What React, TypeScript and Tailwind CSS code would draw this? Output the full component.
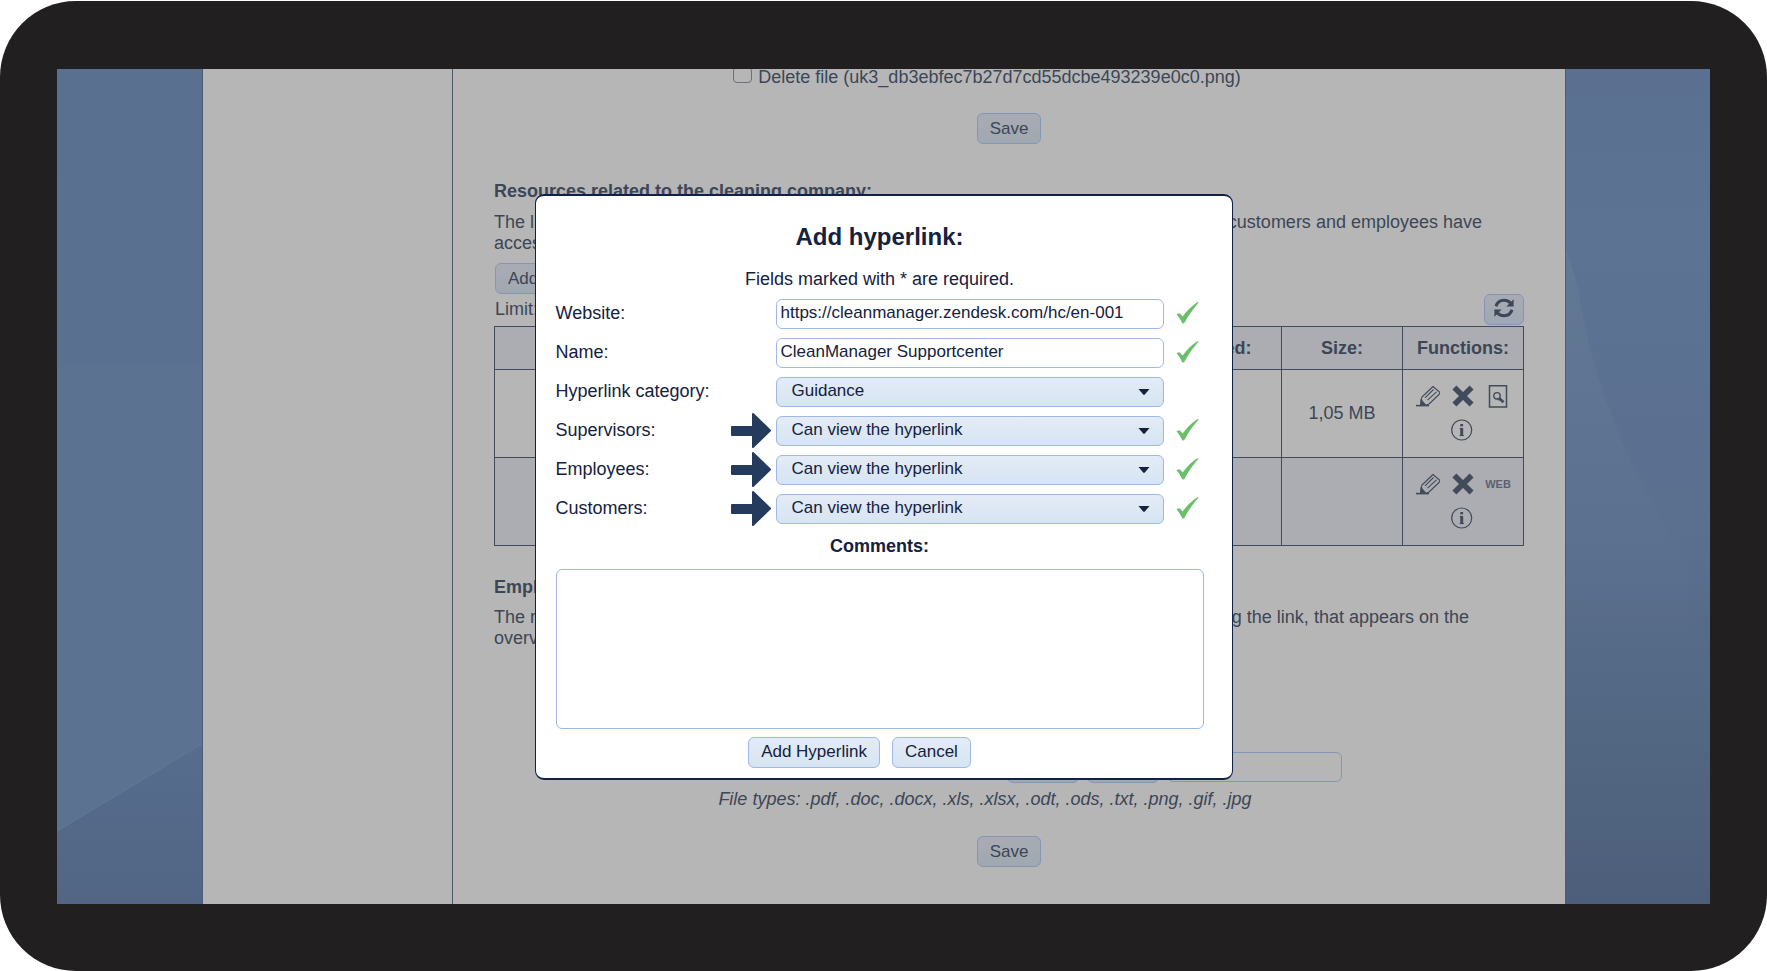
import React, { useState } from 'react';

const ACCESS_OPTIONS = ['Can view the hyperlink', 'Cannot view the hyperlink'];
const CATEGORY_OPTIONS = ['Guidance', 'Instructions', 'Other'];

const CheckIcon: React.FC = () => (
  <svg className="w-6 h-6" viewBox="0 0 24 24" fill="#6abf69">
    <path d="M0.5 12 L3.2 11.2 C4.8 12 5.8 13.2 6.6 14.6 C10.5 9 16 3.6 21.6 0 L22.6 0.6 C17.5 6.5 12 14 8.2 21.2 L6.4 21.4 C4.8 18 2.8 15 0.5 12 Z" />
  </svg>
);

const ArrowIcon: React.FC = () => (
  <svg className="w-10 h-[35px] -my-1" viewBox="0 0 40 35" fill="#243b5e" stroke="#243b5e" strokeWidth={2} strokeLinejoin="round">
    <path d="M1 14 H22 V1 L39 17.5 L22 34 V22 H1 Z" />
  </svg>
);

const RefreshIcon: React.FC = () => (
  <svg className="w-5 h-5 shrink-0" viewBox="0 0 20 20" fill="none" stroke="#3c4656" strokeWidth={3}>
    <path d="M2 8.2 C3.2 4.2 6.3 2.2 10 2.2 C12.6 2.2 14.8 3.2 16.4 5" />
    <path d="M18 11.8 C16.8 15.8 13.7 17.8 10 17.8 C7.4 17.8 5.2 16.8 3.6 15" />
    <path d="M19.6 1.2 V8.4 H12.4 Z M0.4 18.8 V11.6 H7.6 Z" fill="#3c4656" stroke="none" />
  </svg>
);

const PencilIcon: React.FC = () => (
  <svg className="w-6 h-6" viewBox="0 0 24 24" fill="none" stroke="#424b59" strokeWidth={1.1} strokeLinejoin="round">
    <path d="M5.5 12.5 L17 1.5 L24 7.5 L23 9.5 L13 19 L9.5 20.5" />
    <path d="M9 12.8 L17.5 4.5 M11.5 15.2 L20.5 6.8" />
    <path d="M5.5 12.5 V20.5" />
    <path d="M5 14.5 L10 20.5 H4.5 Z" fill="#424b59" />
    <path d="M0 20.6 H13" strokeWidth={1.6} />
  </svg>
);

const DeleteIcon: React.FC = () => (
  <svg className="w-6 h-6" viewBox="0 0 24 24" fill="none" stroke="#424b59" strokeWidth={5.6}>
    <path d="M3.4 2.4 L20.6 19.6 M20.6 2.4 L3.4 19.6" />
  </svg>
);

const PreviewIcon: React.FC = () => (
  <svg className="w-6 h-6" viewBox="0 0 24 24" fill="none" stroke="#424b59">
    <path d="M3.5 0.8 H20.5 V22 H3.5 Z" strokeWidth={1.5} />
    <circle cx="11" cy="10.8" r="3.2" strokeWidth={1.4} />
    <path d="M13.2 13.2 L17.5 17.2" strokeWidth={2.6} />
    <path d="M11.5 14.8 H16" strokeWidth={1} />
  </svg>
);

const InfoIcon: React.FC = () => (
  <svg className="w-6 h-6" viewBox="0 0 24 24" fill="none" stroke="#424b59">
    <circle cx="10.7" cy="11" r="10" strokeWidth={1.2} />
    <path d="M10.7 9 V17" strokeWidth={3} />
    <path d="M8.7 9.4 H10.7 M8.5 16.6 H13" strokeWidth={0.9} />
    <path d="M10.7 5 V7.4" strokeWidth={2.8} />
  </svg>
);

const iconButton = 'w-6 h-6 flex items-center justify-center';

const FunctionIcons: React.FC<{ web?: boolean }> = ({ web }) => (
  <div className="flex flex-wrap justify-center gap-x-[11px] gap-y-[10px]">
    <button type="button" aria-label="Edit" className={iconButton}><PencilIcon /></button>
    <button type="button" aria-label="Delete" className={iconButton}><DeleteIcon /></button>
    {web ? (
      <a href="#web" className="w-6 h-6 flex items-center justify-center text-[11px] font-bold text-[#5a6170]">WEB</a>
    ) : (
      <button type="button" aria-label="Preview" className={iconButton}><PreviewIcon /></button>
    )}
    <button type="button" aria-label="Information" className={iconButton}><InfoIcon /></button>
  </div>
);

const pageButton =
  'h-[31px] px-3 rounded-md border border-[#8496b5] bg-gradient-to-b from-[#a9abb4] to-[#9fa8b1] text-[17px] leading-5 text-[#3c4656]';

const dialogButton =
  'h-[31px] px-3 rounded-md border border-[#9db9e4] bg-gradient-to-b from-[#e4ebf5] to-[#d6e5f3] text-[17px] leading-5 text-[#14213f]';

const textField =
  'w-full h-[30px] px-1 pb-[2px] rounded-md border border-[#9db9e4] bg-white text-[17px] text-[#14213f]';

interface RowProps {
  id: string;
  label: string;
  arrow?: boolean;
  valid?: boolean;
  children: React.ReactNode;
}

const FormRow: React.FC<RowProps> = ({ id, label, arrow, valid, children }) => (
  <div className="h-[30px] flex items-center">
    <label htmlFor={id} className="w-[220px] shrink-0 flex items-center justify-between pr-[5px]">
      {label}
      {arrow && <ArrowIcon />}
    </label>
    <div className="w-[388px] shrink relative">{children}</div>
    <div className="pl-3 w-9 shrink-0">{valid && <CheckIcon />}</div>
  </div>
);

interface SelectProps {
  id: string;
  options: string[];
}

const SelectField: React.FC<SelectProps> = ({ id, options }) => {
  const [value, setValue] = useState(options[0]);
  return (
    <>
      <select
        id={id}
        value={value}
        onChange={(e) => setValue(e.target.value)}
        className="block appearance-none w-full h-[30px] pl-[15px] pr-10 pb-[2px] rounded-md border border-[#9db9e4] bg-gradient-to-b from-[#e4ebf5] to-[#d6e5f3] text-[17px] text-[#14213f]"
      >
        {options.map((o) => (
          <option key={o}>{o}</option>
        ))}
      </select>
      <svg className="absolute right-[14px] top-3 w-3 h-[6px] pointer-events-none" viewBox="0 0 12 6" fill="#14213f">
        <path d="M0.5 0 H11.5 L6.8 5.6 Q6 6.2 5.2 5.6 Z" />
      </svg>
    </>
  );
};

const AddHyperlinkDialog: React.FC = () => {
  const [website, setWebsite] = useState('https://cleanmanager.zendesk.com/hc/en-001');
  const [name, setName] = useState('CleanManager Supportcenter');
  const [comments, setComments] = useState('');

  return (
    <form
      role="dialog"
      aria-labelledby="dialog-title"
      onSubmit={(e) => e.preventDefault()}
      className="w-[698px] max-w-full rounded-[9px] border border-y-2 border-[#0f2145] bg-white pt-[27px] pb-[10px] pl-5 pr-7 text-lg leading-[21px] text-[#14213f]"
    >
      <h2 id="dialog-title" className="text-2xl leading-7 font-bold text-center">Add hyperlink:</h2>
      <p className="mt-[18px] text-center">Fields marked with * are required.</p>

      <div className="mt-[9px] flex flex-col gap-[9px]">
        <FormRow id="website" label="Website:" valid>
          <input id="website" type="text" value={website} onChange={(e) => setWebsite(e.target.value)} className={`block ${textField}`} />
        </FormRow>
        <FormRow id="name" label="Name:" valid>
          <input id="name" type="text" value={name} onChange={(e) => setName(e.target.value)} className={`block ${textField}`} />
        </FormRow>
        <FormRow id="category" label="Hyperlink category:">
          <SelectField id="category" options={CATEGORY_OPTIONS} />
        </FormRow>
        <FormRow id="supervisors" label="Supervisors:" arrow valid>
          <SelectField id="supervisors" options={ACCESS_OPTIONS} />
        </FormRow>
        <FormRow id="employees" label="Employees:" arrow valid>
          <SelectField id="employees" options={ACCESS_OPTIONS} />
        </FormRow>
        <FormRow id="customers" label="Customers:" arrow valid>
          <SelectField id="customers" options={ACCESS_OPTIONS} />
        </FormRow>
      </div>

      <label htmlFor="comments" className="block mt-3 font-bold text-center">Comments:</label>
      <textarea
        id="comments"
        value={comments}
        onChange={(e) => setComments(e.target.value)}
        className="block mt-3 w-full h-40 p-1 resize-none rounded-md border border-[#9db9e4] bg-white text-[17px]"
      />

      <div className="mt-2 pr-10 flex justify-center gap-3">
        <button type="submit" className={dialogButton}>Add Hyperlink</button>
        <button type="button" className={dialogButton}>Cancel</button>
      </div>
    </form>
  );
};

const FilesTable: React.FC = () => (
  <table className="w-full table-fixed border-collapse border border-[#434b5a] text-center">
    <thead>
      <tr className="h-[43px] bg-[#acadb2]">
        <th className="border border-[#434b5a]">Name:</th>
        <th className="border border-[#434b5a] w-[148px]">Uploaded:</th>
        <th className="border border-[#434b5a] w-[121px]">Size:</th>
        <th className="border border-[#434b5a] w-[121px]">Functions:</th>
      </tr>
    </thead>
    <tbody>
      <tr className="h-[88px]">
        <td className="border border-[#434b5a]"></td>
        <td className="border border-[#434b5a]"></td>
        <td className="border border-[#434b5a]">1,05 MB</td>
        <td className="border border-[#434b5a]"><FunctionIcons /></td>
      </tr>
      <tr className="h-[88px] bg-[#acadb2]">
        <td className="border border-[#434b5a]"></td>
        <td className="border border-[#434b5a]"></td>
        <td className="border border-[#434b5a]"></td>
        <td className="border border-[#434b5a]"><FunctionIcons web /></td>
      </tr>
    </tbody>
  </table>
);

const SettingsPage: React.FC = () => (
  <main className="flex-1 min-w-0 flex bg-[#b6b6b6] border-x border-[#4c5d76] text-lg leading-[21px] text-[#3c4656]">
    <nav className="w-[250px] shrink-0 border-r border-[#4b5a6b]"></nav>

    <div className="flex-1 min-w-0 px-[41px] -mt-[2px]">
      <div className="flex items-start justify-center gap-[6px] pr-11">
        <input
          id="delete-file"
          type="checkbox"
          className="appearance-none w-[19px] h-4 rounded-sm border border-[#6c6f76] bg-[#b6b6b6]"
        />
        <label htmlFor="delete-file">Delete file (uk3_db3ebfec7b27d7cd55dcbe493239e0c0.png)</label>
      </div>
      <div className="mt-[25px] flex justify-center">
        <button type="button" className={pageButton}>Save</button>
      </div>

      <h3 className="mt-[37px] font-bold">Resources related to the cleaning company:</h3>
      <div className="mt-[10px]">
        <p className="flex justify-between w-[988px] max-w-full">
          <span>The list below shows the resources</span>
          <span>that customers and employees have</span>
        </p>
        <p>access to.</p>
      </div>
      <button type="button" className={`mt-[9px] ml-px block ${pageButton}`}>Add</button>

      <div className="flex items-center justify-between pl-px">
        <span>Limit:</span>
        <button type="button" aria-label="Refresh" className={`${pageButton} w-10 pb-1 flex items-center justify-center`}>
          <RefreshIcon />
        </button>
      </div>
      <div className="mt-px">
        <FilesTable />
      </div>

      <h3 className="mt-[31px] font-bold">Employee overview:</h3>
      <div className="mt-[9px]">
        <p className="flex justify-between w-[975px] max-w-full">
          <span>The resource can be opened</span>
          <span>by using the link, that appears on the</span>
        </p>
        <p>overview.</p>
      </div>

      <div className="mt-[103px] pr-[182px] flex justify-end gap-2">
        <button type="button" className={`${pageButton} w-[72px]`}>Select</button>
        <button type="button" className={`${pageButton} w-[72px]`}>Clear</button>
        <input type="text" aria-label="Selected file" className="w-[175px] h-[30px] rounded-md border border-[#8496b5] bg-[#b6b6b6]" />
      </div>
      <p className="mt-[6px] pr-12 text-center italic">File types: .pdf, .doc, .docx, .xls, .xlsx, .odt, .ods, .txt, .png, .gif, .jpg</p>
      <div className="mt-[26px] flex justify-center">
        <button type="button" className={pageButton}>Save</button>
      </div>
    </div>
  </main>
);

const App: React.FC = () => (
  <div className="min-h-screen flex bg-white pt-px font-['Liberation_Sans',Arial,sans-serif]">
    <div className="flex-1 min-w-0 flex rounded-[76px] bg-[#221f20] px-[57px] pt-[68px] pb-[67px]">
      <div className="flex-1 min-w-0 grid overflow-hidden">
        <div className="col-start-1 row-start-1 min-w-0 flex">
          <div className="w-[145px] shrink-0 bg-gradient-to-b from-[#5a7090] to-[#5b7191]">
            <svg className="w-full h-full" viewBox="0 0 146 834" preserveAspectRatio="none">
              <defs>
                <linearGradient id="left-shade" x1="0" y1="0" x2="0" y2="1">
                  <stop offset="0" stopColor="#566d8d" />
                  <stop offset="1" stopColor="#526584" />
                </linearGradient>
              </defs>
              <path d="M0 297 H146 V674 L0 761 Z" fill="#5e7492" fillOpacity="0.5" />
              <path d="M0 761 L146 674 V834 H0 Z" fill="url(#left-shade)" />
              <path d="M0 761 L146 674" stroke="#5f7594" strokeWidth="1.5" />
            </svg>
          </div>
          <SettingsPage />
          <div className="w-[144px] shrink-0">
            <svg className="w-full h-full" viewBox="0 0 145 834" preserveAspectRatio="none">
              <defs>
                <linearGradient id="right-base" x1="0" y1="0" x2="0" y2="1">
                  <stop offset="0" stopColor="#5b7090" />
                  <stop offset="0.2" stopColor="#5c7393" />
                  <stop offset="0.55" stopColor="#5b6f8f" />
                  <stop offset="0.8" stopColor="#526782" />
                  <stop offset="1" stopColor="#4d5e7b" />
                </linearGradient>
                <linearGradient id="right-wave" x1="0" y1="0" x2="0" y2="1">
                  <stop offset="0" stopColor="#6a8199" stopOpacity="0.45" />
                  <stop offset="1" stopColor="#5f7691" stopOpacity="0" />
                </linearGradient>
              </defs>
              <path d="M0 0 H145 V834 H0 Z" fill="url(#right-base)" />
              <path d="M0 182 Q8 200 12 220 C30 330 70 410 125 500 V600 H0 Z" fill="url(#right-wave)" />
            </svg>
          </div>
        </div>

        <div className="col-start-1 row-start-1 z-10 flex items-center justify-center">
          <AddHyperlinkDialog />
        </div>
      </div>
    </div>
  </div>
);

export default App;
